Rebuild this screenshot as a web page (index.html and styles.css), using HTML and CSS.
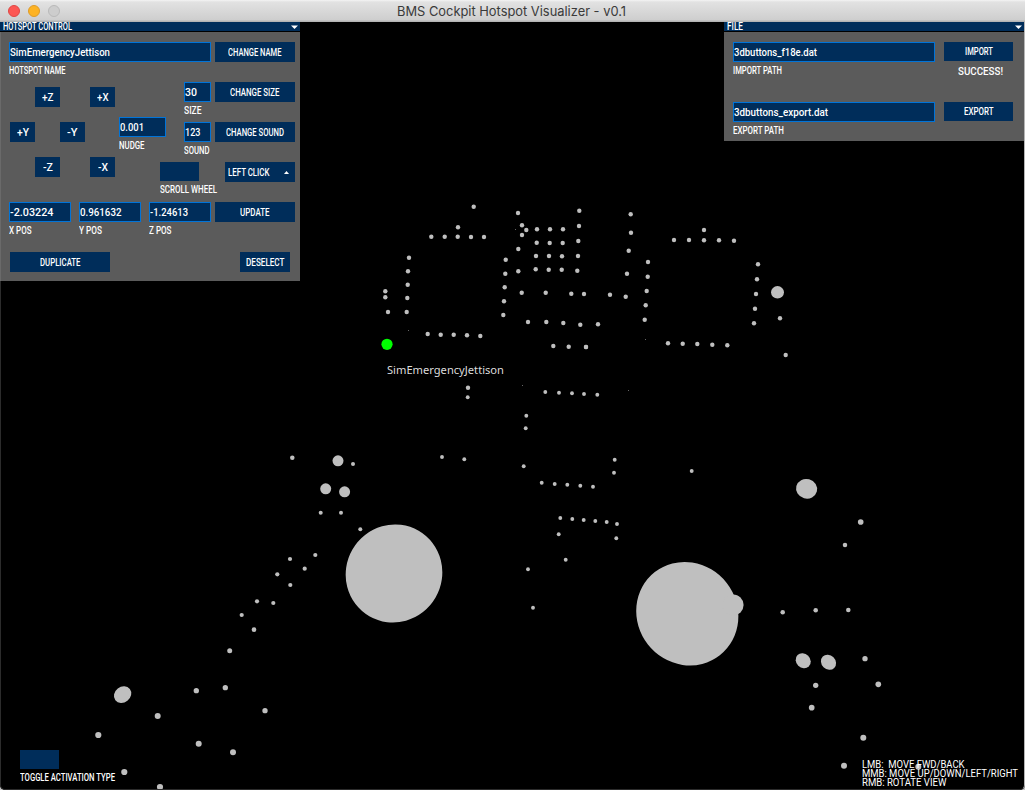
FILE: index.html
```html
<!DOCTYPE html>
<html lang="en">
<head>
<meta charset="utf-8">
<title>BMS Cockpit Hotspot Visualizer - v0.1</title>
<link rel="stylesheet" href="styles.css">
</head>
<body>
<div class="window">
  <header class="titlebar">
    <div class="lights"><i class="red"></i><i class="amber"></i><i class="off"></i></div>
    <span class="title"><span data-w="229">BMS Cockpit Hotspot Visualizer - v0.1</span></span>
  </header>
  <main class="stage">
    <svg class="scene" width="1025" height="768" viewBox="0 22 1025 768"></svg>
    <span class="picked"><span data-w="117">SimEmergencyJettison</span></span>
    <i class="edge"></i>

    <section class="panel control">
      <div class="bar"><span data-w="69">HOTSPOT CONTROL</span><svg width="7" height="4"><path d="M0 .5H7L3.5 4Z"/></svg></div>
      <div class="row name-row">
        <div class="field wide"><div class="input"><span data-w="100">SimEmergencyJettison</span></div><label><span data-w="56.5">HOTSPOT NAME</span></label></div>
        <div class="btn w80"><span data-w="53.5">CHANGE NAME</span></div>
      </div>
      <div class="row mid-row">
        <div class="pad">
          <div class="btn zp"><span data-w="11.5">+Z</span></div>
          <div class="btn xp"><span data-w="11.5">+X</span></div>
          <div class="btn yp"><span data-w="12">+Y</span></div>
          <div class="btn ym"><span data-w="10.5">-Y</span></div>
          <div class="btn zm"><span data-w="10">-Z</span></div>
          <div class="btn xm"><span data-w="10">-X</span></div>
        </div>
        <div class="tools">
          <div class="field nudge"><div class="input"><span data-w="24">0.001</span></div><label><span data-w="25.5">NUDGE</span></label></div>
          <div class="field size"><div class="input"><span data-w="12">30</span></div><label><span data-w="17.5">SIZE</span></label></div>
          <div class="btn w80 do-size"><span data-w="49.5">CHANGE SIZE</span></div>
          <div class="field sound"><div class="input"><span data-w="15.5">123</span></div><label><span data-w="25.5">SOUND</span></label></div>
          <div class="btn w80 do-sound"><span data-w="58">CHANGE SOUND</span></div>
          <div class="field scroll"><div class="toggle"></div><label><span data-w="57">SCROLL WHEEL</span></label></div>
          <div class="btn drop"><span data-w="41.5">LEFT CLICK</span><svg width="5" height="3"><path d="M0 3H5L2.5 0Z"/></svg></div>
        </div>
      </div>
      <div class="row pos-row">
        <div class="field"><div class="input"><span data-w="43.5">-2.03224</span></div><label><span data-w="22.5">X POS</span></label></div>
        <div class="field"><div class="input"><span data-w="41.5">0.961632</span></div><label><span data-w="23">Y POS</span></label></div>
        <div class="field"><div class="input"><span data-w="38">-1.24613</span></div><label><span data-w="22.5">Z POS</span></label></div>
        <div class="btn w80"><span data-w="29.5">UPDATE</span></div>
      </div>
      <div class="row end-row">
        <div class="btn dup"><span data-w="40.5">DUPLICATE</span></div>
        <div class="btn desel"><span data-w="38.5">DESELECT</span></div>
      </div>
    </section>

    <section class="panel file">
      <div class="bar"><span data-w="16">FILE</span><svg width="7" height="4"><path d="M0 .5H7L3.5 4Z"/></svg></div>
      <div class="row file-row">
        <div class="field wide"><div class="input"><span data-w="83">3dbuttons_f18e.dat</span></div><label><span data-w="49">IMPORT PATH</span></label></div>
        <div class="act"><div class="btn"><span data-w="28">IMPORT</span></div><p><span data-w="45">SUCCESS!</span></p></div>
      </div>
      <div class="row file-row">
        <div class="field wide"><div class="input"><span data-w="94">3dbuttons_export.dat</span></div><label><span data-w="51">EXPORT PATH</span></label></div>
        <div class="act"><div class="btn"><span data-w="29.5">EXPORT</span></div></div>
      </div>
    </section>

    <div class="field activation"><div class="toggle"></div><label><span data-w="95">TOGGLE ACTIVATION TYPE</span></label></div>
    <div class="help">
      <div><span data-w="102.5">LMB:&nbsp; MOVE FWD/BACK</span></div>
      <div><span data-w="156">MMB: MOVE UP/DOWN/LEFT/RIGHT</span></div>
      <div><span data-w="84.5">RMB: ROTATE VIEW</span></div>
    </div>
  </main>
</div>
<script src="scene.js"></script>
</body>
</html>
```
FILE: styles.css
```css
* { box-sizing: border-box; }
body { margin: 0; background: #000; overflow: hidden; font: 500 10px/1 Roboto, "Liberation Sans", sans-serif; color: #fff; }
.window { width: 1025px; height: 790px; display: flex; flex-direction: column; }
[data-w] { display: inline-block; white-space: nowrap; flex: none; }

.titlebar { height: 22px; background: linear-gradient(#f4f4f4 0, #e2e2e2 2px, #cecece 20px, #b4b4b4 21px); display: flex; align-items: center; }
.lights { display: flex; gap: 8px; padding-left: 8px; }
.lights i { width: 12px; height: 12px; border-radius: 50%; border: 1px solid; }
.lights .red { background: #fc5753; border-color: #df4744; }
.lights .amber { background: #fdb324; border-color: #de9b28; }
.lights .off { background: #cdcdcd; border-color: #b9b9b9; }
.title { margin-left: 337px; font: 13px/22px Inter, sans-serif; color: #3a3a3a; }

.stage { position: relative; height: 768px; display: flex; justify-content: space-between; align-items: flex-start; background: #000; overflow: hidden; }
.scene { position: absolute; left: 0; top: 0; }
.picked { position: absolute; left: 387px; top: 340px; font: 11px/16px "Noto Sans", sans-serif; color: #dcdcdc; }

.panel { position: relative; width: 300px; background: #5b5b5b; }
.control { height: 259px; border-left: 1px solid #6a6a6a; }
.file { height: 119px; margin-right: 1px; }
.bar { height: 10px; margin-left: -1px; padding: 0 2px 0 3px; background: #002d5a; border-bottom: 1px solid #000; display: flex; align-items: center; justify-content: space-between; line-height: 10px; }
.file .bar { margin-left: 0; }
.bar svg, .drop svg { fill: #fff; }
.row { display: flex; }
.input { height: 20px; border: 1px solid #0074d9; background: #002d5a; line-height: 20px; }
.input span { margin-left: -.5px; }
label { display: block; height: 17px; line-height: 17px; white-space: nowrap; }
.btn { height: 20px; padding-top: 1px; background: #002d5a; display: flex; align-items: center; justify-content: center; line-height: 19px; }
.w80 { width: 80px; }
.wide { width: 202px; }
.toggle { width: 39px; height: 19px; background: #002d5a; }

.name-row { padding: 10px 5px 0 8px; height: 50px; justify-content: space-between; }
.mid-row { height: 120px; padding: 0 5px 0 9px; gap: 4px; }
.pad { display: grid; grid-template-columns: 25px 25px 25px 5px 25px; grid-template-rows: 20px 20px 20px; row-gap: 15px; padding-top: 5px; }
.zp { grid-area: 1 / 2; } .xp { grid-area: 1 / 5; }
.yp { grid-area: 2 / 1; } .ym { grid-area: 2 / 3; }
.zm { grid-area: 3 / 2; } .xm { grid-area: 3 / 5; }
.tools { display: grid; grid-template-columns: 41px 24px 31px 10px 70px; grid-template-rows: 40px 40px 40px; }
.nudge { grid-area: 1 / 1 / 3 / 3; padding-top: 35px; width: 47px; }
.size, .sound { width: 27px; }
.size { grid-area: 1 / 3; }
.do-size { grid-area: 1 / 4 / 2 / 6; }
.sound { grid-area: 2 / 3; }
.do-sound { grid-area: 2 / 4 / 3 / 6; }
.scroll { grid-area: 3 / 2 / 4 / 4; }
.drop { grid-area: 3 / 5; justify-content: space-between; padding: 1px 6px 0 3px; }
.pos-row { height: 50px; padding-left: 8px; gap: 8px; }
.pos-row .field { width: 62px; }
.pos-row .btn { margin-left: -4px; }
.end-row { padding: 0 10px 0 9px; justify-content: space-between; }
.dup { width: 100px; }
.desel { width: 50px; }

.file-row { height: 60px; padding: 10px 11px 0 9px; justify-content: space-between; }
.act { width: 69px; }
.act .btn { height: 19px; padding-top: 0; }
.act p { margin: 0; line-height: 21px; text-align: center; }
.act p [data-w] { margin-left: 3px; }

.activation { position: absolute; left: 19.5px; top: 728px; }
.help { position: absolute; left: 862px; top: 738px; line-height: 9px; font-weight: 400; }
.edge { position: absolute; inset: 0; border-left: 1px solid #2c2c2c; border-right: 1px solid #b5b5b5; border-bottom: 1px solid #2c2c2c; border-radius: 0 0 5px 5px; box-shadow: 0 0 0 6px #c4c4c4; pointer-events: none; }
```
FILE: scene.js
```js
// Hotspots, grouped by cockpit area; coordinates are in thirds of a pixel from each origin.
const groups = [
  { at: [370, 190], pts: [[311,50],[264,112],[184,140],[224,140],[263,140],[303,141],[342,141],
    [117,203],[114,244],[113,284],[112,324],[110,366],[46,304],[46,322],[54,366],
    [173,432],[212,434],[251,434],[291,436],[331,438],
    [407,209],[406,251],[404,292],[402,334],[400,375],
    [444,69],[456,106],[469,120],[456,135],[445,177],[445,244],
    [501,118],[540,118],[579,118],[500,158],[539,159],[578,159],[498,198],[537,198],[576,199],
    [497,238],[536,239],[575,239],[628,62],[627,108],[625,153],[624,198],[622,242],
    [455,308],[527,308],[604,311],[642,312],[474,396],[529,396],[580,399],[631,404],
    [550,468],[596,470],[648,471],[294,593]] },
  { at: [580, 190], pts: [[152,73],[153,128],[146,182],[141,251],[90,314],[137,320],
    [204,216],[203,260],[200,303],[197,346],[194,389],[54,403],
    [282,150],[327,150],[372,151],[417,151],[462,152],[372,120],
    [534,223],[531,268],[528,312],[525,356],[522,400],[600,385],[617,495],
    [264,460],[308,461],[352,462],[397,464],[442,466],[18,471]] },
  { at: [420, 370], pts: [[143,82],[376,66],[417,68],[456,70],[492,72],[532,74],[319,137],[317,175],
    [66,261],[133,268],[311,289],[584,269],[582,308],[815,303],
    [365,338],[404,342],[442,344],[481,347],[519,350],
    [421,444],[457,447],[491,450],[526,453],[560,456],[591,462],[416,493],[589,505],
    [437,569],[324,598],[339,713]], r: 5.8 },
  { at: [270, 440], pts: [[67,53,6.8],[249,72],[152,218],[213,218],[271,268]], r: 6 },
  { at: [620, 440], pts: [[722,246,8.5],[675,315],[488,517],[587,511],[685,510]], r: 6.8 },
  { at: [80, 540], pts: [[706,45],[630,57],[674,86],[592,103],[631,135],[531,184],[580,189],[485,225],
    [522,269,7],[449,332,7.5],[436,443,8],[349,452,8],[555,512,8],[233,528,9],[55,585,9.3],
    [356,611,9],[459,637,9],[133,696,9.3],[240,741,9.3]], r: 6.3 },
  { at: [760, 640], pts: [[315,56],[355,133,8.5],[167,136],[155,203,8.5],[310,293,9],[252,377,9],[475,380,9]], r: 8 }
];
// Faint distant points: x, y
const specks = [[515.5,229.5],[408.5,330.5],[522.5,385.5],[628.5,390.5],[645.5,339.5]];
// Large spheres: cx, cy, rx, ry, rotation
const spheres = [
  [394,573.5,48,49.3,30],[687.3,613.7,50,52.8,-38],[733,605,10.6,10.6,0],
  [777.5,292.3,6.5,6.2,0],[806.6,488.8,10.6,9.8,15],[338,460.8,5.5,5.5,0],[325.7,488.8,5.5,5.5,0],
  [344.6,491.8,5.5,5.5,0],[122.6,694.6,9.2,7.8,-38],[803.2,660.7,8,7,45],[828.5,662.2,8.1,7,45]
];
let out = '';
for (const g of groups)
  for (const [x, y, r] of g.pts)
    out += `<circle cx="${(g.at[0] + x / 3).toFixed(1)}" cy="${(g.at[1] + y / 3).toFixed(1)}" r="${((r || g.r || 6.6) / 3).toFixed(2)}"/>`;
for (const [x, y] of specks) out += `<rect x="${x - .5}" y="${y - .5}" width="1" height="1" fill="#666"/>`;
for (const [x, y, a, b, t] of spheres) out += `<ellipse cx="${x}" cy="${y}" rx="${a}" ry="${b}" transform="rotate(${t} ${x} ${y})"/>`;
document.querySelector('.scene').innerHTML =
  `<g fill="#bfbfbf">${out}</g><circle cx="387" cy="344.3" r="5.6" fill="#0f0"/>`;

// Condense each caption to its set width.
for (const el of document.querySelectorAll('[data-w]')) {
  const natural = el.getBoundingClientRect().width, want = +el.dataset.w;
  el.style.transformOrigin = '0 50%';
  el.style.transform = `scaleX(${want / natural})`;
  el.style.marginRight = `${want - natural}px`;
}
```
